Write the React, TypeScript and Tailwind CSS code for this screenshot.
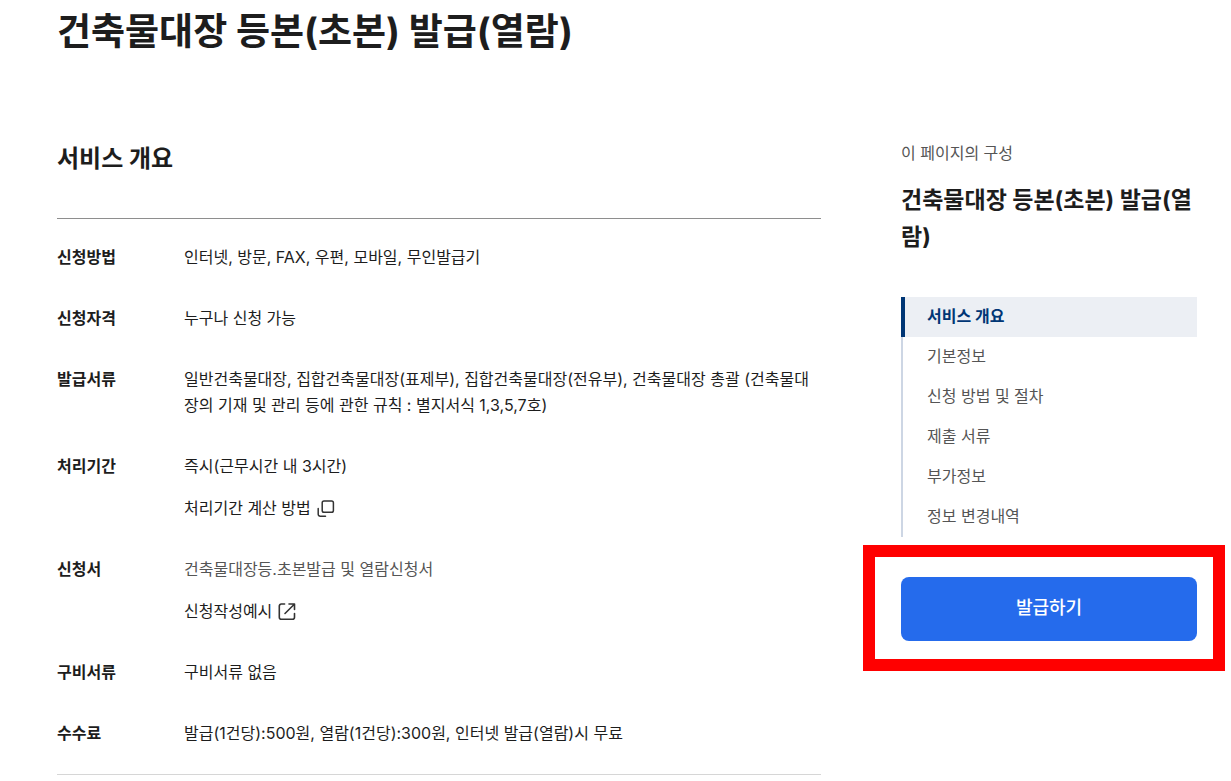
import type { ReactNode } from 'react'

type Row = {
  label: string
  content: ReactNode
}

const rows: Row[] = [
  { label: '신청방법', content: '인터넷, 방문, FAX, 우편, 모바일, 무인발급기' },
  { label: '신청자격', content: '누구나 신청 가능' },
  {
    label: '발급서류',
    content:
      '일반건축물대장, 집합건축물대장(표제부), 집합건축물대장(전유부), 건축물대장 총괄 (건축물대장의 기재 및 관리 등에 관한 규칙 : 별지서식 1,3,5,7호)',
  },
  {
    label: '처리기간',
    content: (
      <>
        <p>즉시(근무시간 내 3시간)</p>
        <button type="button" className="flex items-center gap-[5px] cursor-pointer">
          처리기간 계산 방법
          <PopupIcon />
        </button>
      </>
    ),
  },
  {
    label: '신청서',
    content: (
      <>
        <p className="text-[#555555]">건축물대장등.초본발급 및 열람신청서</p>
        <a href="#example" className="flex items-center gap-[5px]">
          신청작성예시
          <ExternalIcon />
        </a>
      </>
    ),
  },
  { label: '구비서류', content: '구비서류 없음' },
  { label: '수수료', content: '발급(1건당):500원, 열람(1건당):300원, 인터넷 발급(열람)시 무료' },
]

const sections = ['서비스 개요', '기본정보', '신청 방법 및 절차', '제출 서류', '부가정보', '정보 변경내역']

function PopupIcon() {
  return (
    <svg viewBox="0 0 20 20" fill="none" stroke="#333333" strokeWidth="1.5" strokeLinecap="round" className="w-5 h-5" aria-hidden="true">
      <rect x="6.2" y="3" width="11.2" height="11.2" rx="1.8" />
      <path d="M2.2 10.5v5.7a2 2 0 0 0 2 2h5.3" />
    </svg>
  )
}

function ExternalIcon() {
  return (
    <svg viewBox="0 0 20 20" fill="none" stroke="#333333" strokeWidth="1.6" strokeLinecap="round" strokeLinejoin="round" className="w-5 h-5" aria-hidden="true">
      <path d="M7.6 3H4.3a2 2 0 0 0-2 2v11.2a2 2 0 0 0 2 2h11.2a2 2 0 0 0 2-2v-3.6" />
      <path d="M12 3h5.5v5.5M17.3 3.2L8 12.5" />
    </svg>
  )
}

export default function App() {
  return (
    <div className="bg-white pl-[57px] pr-[34px] text-[16px] leading-[26px] text-[#1d1d1d] font-['Inter','Noto_Sans_CJK_KR',sans-serif]">
      <h1 className="text-[37px] leading-[64px] font-bold">건축물대장 등본(초본) 발급(열람)</h1>

      <div className="flex gap-20 pt-[76px]">
        <main className="flex-1 min-w-0">
          <h2 className="text-[24px] leading-[38px] font-bold">서비스 개요</h2>
          <dl className="mt-10 flex flex-col gap-[35px] border-t border-[#8e8e8e] border-b border-b-[#d6d6d6] pt-[25px] pb-7">
            {rows.map((row) => (
              <div key={row.label} className="flex">
                <dt className="w-[127px] shrink-0 font-bold">{row.label}</dt>
                <dd className="flex flex-col items-start gap-4 pr-2 break-all">{row.content}</dd>
              </div>
            ))}
          </dl>
        </main>

        <aside className="w-[296px] shrink-0">
          <p className="text-[#555555]">이 페이지의 구성</p>
          <h2 className="mt-4 text-[23px] leading-[37px] font-bold break-all">건축물대장 등본(초본) 발급(열람)</h2>

          <nav className="mt-[41px]">
            <ul>
              {sections.map((section, i) => (
                <li key={section}>
                  <a
                    href={`#section-${i + 1}`}
                    aria-current={i === 0 ? 'true' : undefined}
                    className={[
                      'flex h-10 items-center pb-0.5',
                      i === 0
                        ? 'border-l-4 border-[#003675] bg-[#eceff4] pl-[22px] font-bold text-[#003675]'
                        : 'border-l-2 border-[#cdd6e4] pl-6 text-[#555555]',
                    ].join(' ')}
                  >
                    {section}
                  </a>
                </li>
              ))}
            </ul>
          </nav>

          <div className="relative mt-10">
            <button type="button" className="h-16 w-full rounded-lg bg-[#256bec] pb-0.5 text-[18px] font-medium text-white cursor-pointer">
              발급하기
            </button>
            {/* Highlight frame around the button */}
            <span className="pointer-events-none absolute -top-8 -bottom-[30px] -left-[38px] -right-7 border-12 border-[#ff0000]" />
          </div>
        </aside>
      </div>
    </div>
  )
}
